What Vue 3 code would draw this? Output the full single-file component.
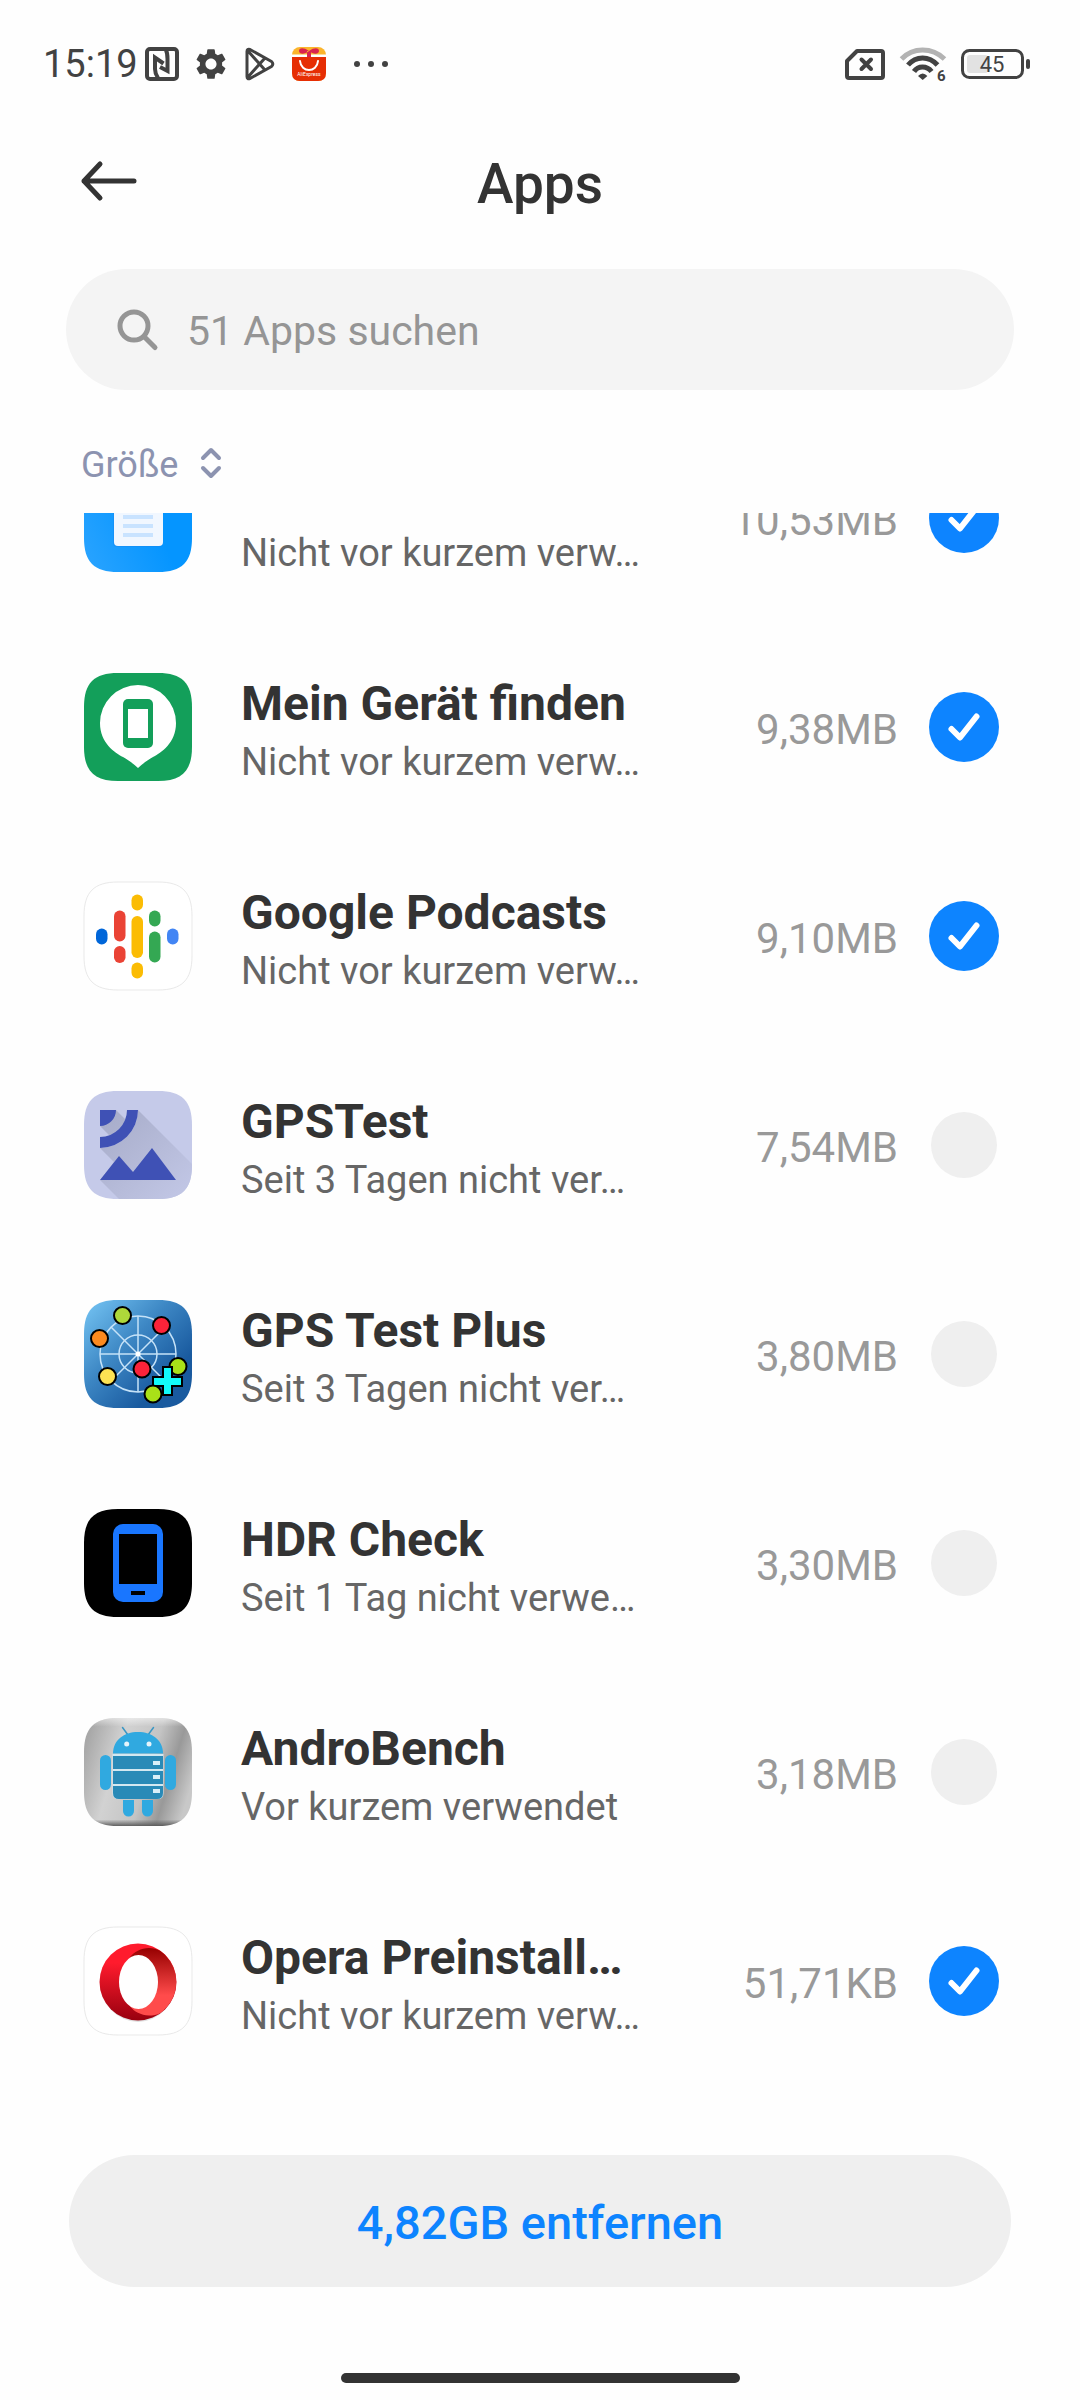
<template>
  <div class="screen">
    <div class="status">
      <div class="status-group">
        <span class="status-time">15:19</span>
        <!-- NFC -->
        <svg class="status-icon" viewBox="0 0 34 34" fill="none" stroke="#424242">
          <rect x="2" y="2" width="30" height="30" rx="3" stroke-width="4" />
          <path d="M13 31C11 28 10 26 10 22V10.500L18.500 16.500M21 3C22 5 22.500 8 22.500 12V24L15 20" stroke-width="4" />
        </svg>
        <!-- settings -->
        <svg class="status-icon" viewBox="1 1 22 22" fill="#424242">
          <path d="M19.14 12.94c.04-.3.06-.61.06-.94 0-.32-.02-.64-.07-.94l2.03-1.58c.18-.14.23-.41.12-.61l-1.92-3.32c-.12-.22-.37-.29-.59-.22l-2.39.96c-.5-.38-1.030-.7-1.620-.94L14.400 2.810c-.04-.24-.24-.41-.48-.41h-3.840c-.24 0-.43.17-.47.41L9.250 5.350C8.660 5.590 8.120 5.920 7.630 6.290L5.240 5.330c-.22-.08-.47 0-.59.22L2.740 8.870c-.12.21-.08.47.12.61l2.030 1.580C4.840 11.360 4.800 11.690 4.800 12s.02.64.07.94l-2.030 1.580c-.18.14-.23.41-.12.61l1.920 3.320c.12.22.37.29.59.22l2.390-.96c.5.38 1.030.7 1.620.94l.36 2.540c.05.24.24.41.48.41h3.840c.24 0 .44-.17.47-.41l.36-2.540c.59-.24 1.130-.56 1.620-.94l2.390.96c.22.08.47 0 .59-.22l1.920-3.320c.12-.22.07-.47-.12-.61zM12 15.600c-1.980 0-3.600-1.620-3.600-3.600s1.620-3.600 3.600-3.600 3.600 1.620 3.600 3.600-1.620 3.600-3.600 3.600z" />
        </svg>
        <!-- play store -->
        <svg class="status-icon" viewBox="0 0 34 34" fill="none" stroke="#424242" stroke-width="3" stroke-linejoin="round">
          <path d="M4 4.500Q4 1.500 7 2.500L28.500 14.500Q31 17 28.500 19.500L7 31.500Q4 32.500 4 29.500ZM5 4L22 23M5 30L22 11" />
        </svg>
        <!-- shopping -->
        <svg class="status-icon" viewBox="0 0 34 34">
          <rect width="34" height="34" rx="8" fill="#fbb52c" />
          <path d="M0 9H34V26Q34 34 26 34H8Q0 34 0 26Z" fill="#e62e04" />
          <path d="M0 7.500H34V10H0Z" fill="#fff" />
          <path d="M17 4C11 0 7 1 7 4S12 8 17 4ZM17 4C23 0 27 1 27 4S22 8 17 4ZM15 4H19V10H15Z" fill="#d9234f" />
          <path d="M8 14C9 26 25 26 26 14" fill="none" stroke="#fff" stroke-width="2" stroke-linecap="round" />
          <text x="17" y="29" font-size="5" text-anchor="middle" fill="#fff">AliExpress</text>
        </svg>
        <svg class="status-dots" viewBox="0 0 50 34" fill="#424242">
          <circle cx="16" cy="17" r="3" />
          <circle cx="30" cy="17" r="3" />
          <circle cx="44" cy="17" r="3" />
        </svg>
      </div>
      <div class="status-group">
        <svg class="status-sim" viewBox="0 0 40 31" fill="none" stroke="#424242" stroke-width="4" stroke-linejoin="round">
          <path d="M2 12L12 2H36Q38 2 38 4V27Q38 29 36 29H4Q2 29 2 27Z" />
          <path d="M16.500 10.500L26 20M26 10.500L16.500 20" stroke-linecap="round" />
        </svg>
        <svg class="status-wifi" viewBox="0 0 46 36" fill="none" stroke="#424242" stroke-width="5">
          <path d="M1.500 13C13 1 32 1 44.500 13" stroke="#b3b3b3" />
          <path d="M8 19C16 9.500 29 9.500 37.500 19" />
          <path d="M14 25.500C18 19.500 27 19.500 31.500 25.500" />
          <path d="M18 30Q22.700 25 27.400 30L22.700 34Z" fill="#424242" stroke="none" />
          <text x="37" y="35" font-size="15" font-weight="700" fill="#424242" stroke="none">6</text>
        </svg>
        <svg class="status-battery" viewBox="0 0 69 30">
          <rect x="6" y="6" width="21" height="18" rx="3" fill="#e2e2e2" />
          <rect x="1.500" y="1.500" width="60" height="27" rx="7" fill="none" stroke="#424242" stroke-width="3" />
          <rect x="65" y="10" width="4" height="10" rx="2" fill="#424242" />
          <text x="31" y="23" font-size="22" text-anchor="middle" fill="#424242">45</text>
        </svg>
      </div>
    </div>

    <header class="header">
      <button class="back" type="button" aria-label="Zurück">
        <svg viewBox="0 0 58 42" fill="none" stroke="#333" stroke-width="5" stroke-linecap="round" stroke-linejoin="round">
          <path d="M54 18H4M20 1L4 18L20 35" />
        </svg>
      </button>
      <h1 class="title">Apps</h1>
    </header>

    <label class="search">
      <svg class="search-icon" viewBox="0 0 42 42" fill="none" stroke="#959595" stroke-width="5" stroke-linecap="round">
        <circle cx="17" cy="17" r="14" />
        <path d="M27 27.500L38 38.500" />
      </svg>
      <input v-model="query" class="search-input" type="text" placeholder="51 Apps suchen" aria-label="51 Apps suchen" />
    </label>

    <div class="sort">
      <button class="sort-button" type="button">
        Größe
        <svg class="sort-icon" viewBox="0 0 22 34" fill="none" stroke="#8c93b0" stroke-width="4" stroke-linecap="round" stroke-linejoin="round">
          <path d="M3 10L11 2L19 10M3 20L11 28L19 20" />
        </svg>
      </button>
    </div>

    <div class="list-view">
      <ul class="list">
        <li v-for="app in apps" :key="app.id">
          <label class="app">
            <svg class="app-icon" viewBox="0 0 108 108">
              <defs>
                <linearGradient id="files-bg" x1="0" y1="1" x2="1" y2="0.500">
                  <stop offset="0" stop-color="#2ba4ff" />
                  <stop offset="0.700" stop-color="#0595ff" />
                </linearGradient>
                <linearGradient id="shade" x1="0" y1="0" x2="1" y2="1">
                  <stop offset="0.100" stop-color="#a9aecb" />
                  <stop offset="1" stop-color="#c3c8e7" />
                </linearGradient>
                <linearGradient id="plus-bg" x1="0" y1="0" x2="1" y2="1">
                  <stop offset="0" stop-color="#76c6f5" />
                  <stop offset="0.400" stop-color="#3d87c4" />
                  <stop offset="0.750" stop-color="#195a9f" />
                </linearGradient>
                <linearGradient id="metal" x1="0" y1="0.300" x2="1" y2="0.600">
                  <stop offset="0" stop-color="#a8a8a8" />
                  <stop offset="0.300" stop-color="#d2d2d2" />
                  <stop offset="0.600" stop-color="#c4c4c4" />
                  <stop offset="0.800" stop-color="#999" />
                  <stop offset="1" stop-color="#c8c8c8" />
                </linearGradient>
                <linearGradient id="metal-edge" x1="0" y1="0" x2="0" y2="1">
                  <stop offset="0" stop-color="#fff" stop-opacity="0.500" />
                  <stop offset="0.080" stop-color="#fff" stop-opacity="0" />
                  <stop offset="0.940" stop-color="#555" stop-opacity="0" />
                  <stop offset="1" stop-color="#555" stop-opacity="0.900" />
                </linearGradient>
                <linearGradient id="opera-left" x1="0" y1="0" x2="0" y2="1">
                  <stop offset="0.250" stop-color="#ff1b2d" />
                  <stop offset="1" stop-color="#98000f" />
                </linearGradient>
                <linearGradient id="opera-right" x1="0" y1="0" x2="0" y2="1">
                  <stop offset="0" stop-color="#960000" />
                  <stop offset="0.700" stop-color="#ff4b4b" />
                </linearGradient>
                <clipPath id="squircle">
                  <path :d="squircle" />
                </clipPath>
              </defs>

              <path :d="squircle" :fill="app.bg" />

              <g v-if="app.id === 'files'">
                <rect x="29" y="20" width="50" height="63" rx="4" fill="#1684ee" opacity="0.400" />
                <rect x="30" y="18" width="49" height="64" rx="4" fill="#f1f7ff" />
                <path d="M39 53H69M39 62H69M39 71H69" stroke="#c9e3ff" stroke-width="4" />
              </g>

              <g v-else-if="app.id === 'find'">
                <path d="M54 95C50 91 44 87 39 84C31 80 16 70 16 50A38 38 0 0 1 92 50C92 70 77 80 69 84C64 87 58 91 54 95Z" fill="#fff" />
                <rect x="39" y="26" width="30" height="49" rx="5" fill="#139f5a" />
                <rect x="44" y="36" width="20" height="29" fill="#fff" />
              </g>

              <g v-else-if="app.id === 'podcasts'">
                <path :d="squircle" class="app-outline" />
                <rect
                  v-for="(pill, i) in pills"
                  :key="i"
                  :x="pill.x"
                  :y="pill.y"
                  :height="pill.h"
                  :fill="pill.color"
                  width="11.500"
                  rx="5.700"
                />
              </g>

              <g v-else-if="app.id === 'gpstest'" clip-path="url(#squircle)">
                <path d="M54 19L108 73V108H35L16 89L30 71L16 57A38 38 0 0 0 54 19ZM32 19L44 31L28 47L16 35Z" fill="url(#shade)" />
                <path d="M16 19H32A16 16 0 0 1 16 35ZM43 19H54A38 38 0 0 1 16 57V46A27 27 0 0 0 43 19ZM16 89L35 65L49 81L68 57L92 89Z" fill="#3f51b5" />
              </g>

              <g v-else-if="app.id === 'gpsplus'">
                <g fill="none" stroke="#c5e2f8" stroke-width="1.500">
                  <circle cx="54" cy="54" r="38" />
                  <circle cx="54" cy="54" r="19" />
                  <path d="M54 16V92M16 54H92M27 27L81 81M81 27L27 81" />
                </g>
                <circle cx="54" cy="54" r="2.500" fill="#fff" />
                <g stroke="#000" stroke-width="2">
                  <circle v-for="(dot, i) in dots" :key="i" :cx="dot.x" :cy="dot.y" :fill="dot.color" r="8.500" />
                  <path d="M79 67H88V77H98V86H88V95H79V86H69V77H79Z" fill="#12fbfb" />
                  <circle cx="69" cy="94" r="8.500" fill="#a9e118" />
                </g>
              </g>

              <g v-else-if="app.id === 'hdr'">
                <rect x="29" y="15" width="50" height="78" rx="10" fill="#1976ff" />
                <path d="M35 25H73V75H35ZM47 82H61V86H47Z" fill="#000" />
              </g>

              <g v-else-if="app.id === 'bench'">
                <path :d="squircle" fill="url(#metal-edge)" />
                <path d="M38.500 9.500L44 17M69.500 9.500L64 17" stroke="#3a97c4" stroke-width="1.500" stroke-linecap="round" />
                <path d="M28.500 36H79.500V75Q79.500 81 74 81H34Q28.500 81 28.500 75Z" fill="#d3e8f1" />
                <path d="M29 35.500C29 22 40 14 54 14S79 22 79 35.500Z" fill="#30a9e0" />
                <path d="M29 38H79V51H29ZM29 53H79V66H29ZM29 68H79V75Q79 81 73 81H35Q29 81 29 75Z" fill="#298ab7" />
                <path d="M69 43H76V47H69ZM69 57H76V61H69ZM69 71H76V75H69Z" fill="#d9eef8" />
                <g fill="#30a9e0">
                  <rect x="16" y="37" width="11" height="35" rx="5.500" />
                  <rect x="81" y="37" width="11" height="35" rx="5.500" />
                  <path d="M39 82H50V93A5.500 5.500 0 0 1 39 93ZM58 82H69V93A5.500 5.500 0 0 1 58 93Z" />
                </g>
                <circle cx="42.700" cy="26" r="2.500" fill="#e6f4fb" />
                <circle cx="65" cy="26" r="2.500" fill="#e6f4fb" />
              </g>

              <g v-else>
                <path :d="squircle" class="app-outline" />
                <ellipse cx="54" cy="57" rx="37" ry="38" fill="#000" opacity="0.120" />
                <circle cx="54" cy="55" r="38.500" fill="url(#opera-left)" />
                <path d="M46 30C50 25 57 21 65 21C69 21 73 22 76.500 24A38.500 38.500 0 0 1 76.500 86C73 88 69 88.500 65 88.500C57 88 50 85 46 79L54 70V40Z" fill="url(#opera-right)" />
                <ellipse cx="54.500" cy="55" rx="19.500" ry="27" fill="#fff" />
              </g>
            </svg>

            <span class="app-text">
              <span class="app-name">{{ app.name }}</span>
              <span class="app-usage">{{ app.usage }}</span>
            </span>
            <span class="app-size">{{ app.size }}</span>
            <span class="app-check">
              <input v-model="app.checked" class="app-input" type="checkbox" />
              <svg v-if="app.checked" class="app-tick" viewBox="0 0 70 70" fill="none" stroke="#fff" stroke-width="6" stroke-linecap="round" stroke-linejoin="round">
                <path d="M22.500 37L31 45.500L47.500 24.500" />
              </svg>
            </span>
          </label>
        </li>
      </ul>
    </div>

    <footer class="footer">
      <button class="remove" type="button">4,82GB entfernen</button>
      <div class="home-bar"></div>
    </footer>
  </div>
</template>

<script setup>
import { ref } from 'vue'

const query = ref('')

const squircle = 'M0 34C0 10 10 0 34 0H74C98 0 108 10 108 34V74C108 98 98 108 74 108H34C10 108 0 98 0 74Z'

const apps = ref([
  { id: 'files', name: '', usage: 'Nicht vor kurzem verw…', size: '10,53MB', checked: true, bg: 'url(#files-bg)' },
  { id: 'find', name: 'Mein Gerät finden', usage: 'Nicht vor kurzem verw…', size: '9,38MB', checked: true, bg: '#139f5a' },
  { id: 'podcasts', name: 'Google Podcasts', usage: 'Nicht vor kurzem verw…', size: '9,10MB', checked: true, bg: '#fff' },
  { id: 'gpstest', name: 'GPSTest', usage: 'Seit 3 Tagen nicht ver…', size: '7,54MB', checked: false, bg: '#c5cae9' },
  { id: 'gpsplus', name: 'GPS Test Plus', usage: 'Seit 3 Tagen nicht ver…', size: '3,80MB', checked: false, bg: 'url(#plus-bg)' },
  { id: 'hdr', name: 'HDR Check', usage: 'Seit 1 Tag nicht verwe…', size: '3,30MB', checked: false, bg: '#000' },
  { id: 'bench', name: 'AndroBench', usage: 'Vor kurzem verwendet', size: '3,18MB', checked: false, bg: 'url(#metal)' },
  { id: 'opera', name: 'Opera Preinstall…', usage: 'Nicht vor kurzem verw…', size: '51,71KB', checked: true, bg: '#fff' }
])

const pills = [
  { x: 12, y: 46.5, h: 16, color: '#0066d9' },
  { x: 30, y: 28.5, h: 31, color: '#ea4335' },
  { x: 30, y: 64, h: 17, color: '#ea4335' },
  { x: 47.5, y: 12.5, h: 16, color: '#fbbc04' },
  { x: 47.5, y: 34, h: 42, color: '#fbbc04' },
  { x: 47.5, y: 80.5, h: 16, color: '#fbbc04' },
  { x: 65, y: 28.5, h: 16, color: '#34a853' },
  { x: 65, y: 49.5, h: 31, color: '#34a853' },
  { x: 83, y: 46.5, h: 16, color: '#4285f4' }
]

const dots = [
  { x: 38.5, y: 15.5, color: '#aed83a' },
  { x: 77.5, y: 25.5, color: '#fb2339' },
  { x: 15.5, y: 38.5, color: '#fc8a1f' },
  { x: 58, y: 69, color: '#fb2339' },
  { x: 23.5, y: 76.5, color: '#fde253' },
  { x: 94, y: 66.5, color: '#a9e118' }
]
</script>

<style>
body {
  margin: 0;
  background: #fefefe;
}
</style>

<style scoped>
.screen {
  display: flex;
  flex-direction: column;
  min-height: 100vh;
  font-family: Roboto, 'Liberation Sans', sans-serif;
  color: #333;
}

button,
input {
  margin: 0;
  padding: 0;
  border: none;
  background: none;
  font-family: inherit;
  outline: none;
}

svg {
  display: block;
  flex: none;
  overflow: visible;
}

.status {
  display: flex;
  justify-content: space-between;
  align-items: center;
  height: 128px;
  padding: 0 50px 0 43px;
}

.status-group {
  display: flex;
  align-items: center;
  gap: 15px;
}

.status-time {
  margin-right: -8px;
  font-size: 38px;
  line-height: 44px;
  color: #424242;
}

.status-icon {
  width: 34px;
  height: 34px;
}

.status-dots {
  width: 50px;
  height: 34px;
}

.status-sim {
  width: 40px;
  height: 31px;
}

.status-wifi {
  width: 46px;
  height: 36px;
}

.status-battery {
  width: 69px;
  height: 30px;
}

.header {
  display: grid;
  grid-template-columns: 58px 1fr 58px;
  align-items: center;
  height: 112px;
  padding: 0 80px;
}

.back svg {
  width: 58px;
  height: 42px;
}

.title {
  margin: 0;
  font-size: 55px;
  line-height: 64px;
  font-weight: 500;
  text-align: center;
}

.search {
  display: flex;
  align-items: center;
  gap: 28px;
  height: 121px;
  margin: 29px 66px 0;
  padding: 0 51px;
  border-radius: 61px;
  background: #f4f4f4;
}

.search-icon {
  width: 42px;
  height: 42px;
}

.search-input {
  flex: 1;
  min-width: 0;
  padding-top: 2px;
  font-size: 41px;
  line-height: 48px;
  color: #333;
}

.search-input::placeholder {
  color: #959595;
  opacity: 1;
}

.sort {
  display: flex;
  align-items: center;
  height: 97px;
  padding: 26px 81px 0;
}

.sort-button {
  display: flex;
  align-items: center;
  gap: 22px;
  font-size: 36px;
  line-height: 44px;
  color: #8c93b0;
}

.sort-icon {
  width: 22px;
  height: 34px;
}

.list-view {
  overflow: hidden;
}

/* scrolled: the first row is half hidden below the sort bar */
.list {
  display: grid;
  gap: 92px;
  margin: -49px 0 0;
  padding: 0 81px 0 84px;
  list-style: none;
}

.app {
  display: flex;
  align-items: flex-start;
}

.app-icon {
  width: 108px;
  height: 108px;
  margin-right: 49px;
}

.app-outline {
  fill: none;
  stroke: #e9e9e9;
  stroke-width: 1;
}

.app-text {
  display: flex;
  flex: 1;
  flex-direction: column;
  min-width: 0;
  white-space: nowrap;
}

.app-name {
  min-height: 62px;
  font-size: 48px;
  line-height: 62px;
  font-weight: 700;
}

.app-usage {
  font-size: 38px;
  line-height: 55px;
  color: #666;
}

.app-size {
  font-size: 42px;
  line-height: 114px;
  color: #999;
}

.app-check {
  display: grid;
  place-items: center;
  width: 70px;
  height: 108px;
  margin-left: 31px;
}

.app-input,
.app-tick {
  grid-area: 1 / 1;
}

.app-input {
  width: 66px;
  height: 66px;
  border-radius: 50%;
  background: #efefef;
  appearance: none;
}

.app-input:checked {
  width: 70px;
  height: 70px;
  background: #0d84ff;
}

.app-tick {
  width: 70px;
  height: 70px;
  pointer-events: none;
}

.footer {
  display: flex;
  flex-direction: column;
  align-items: center;
  gap: 86px;
  margin-top: auto;
  padding: 0 69px 17px;
}

.remove {
  width: 100%;
  height: 132px;
  padding-top: 2px;
  border-radius: 66px;
  background: #efefef;
  font-size: 47px;
  font-weight: 500;
  color: #0d84ff;
}

.home-bar {
  width: 399px;
  height: 10px;
  border-radius: 5px;
  background: #333;
}
</style>
